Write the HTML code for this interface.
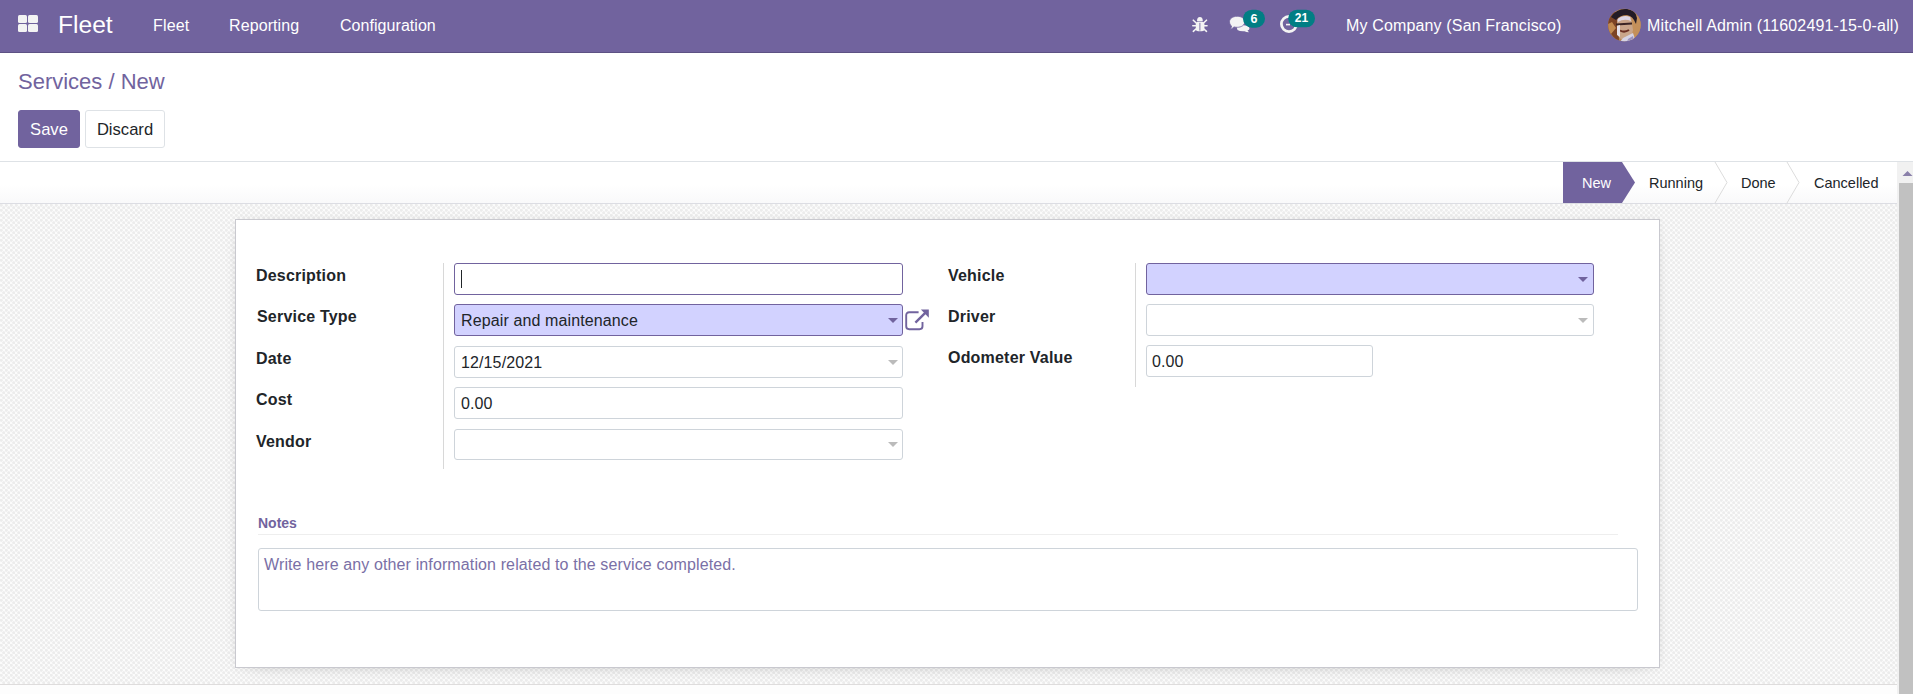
<!DOCTYPE html>
<html><head><meta charset="utf-8">
<style>
*{box-sizing:border-box;margin:0;padding:0}
html,body{width:1913px;height:694px;overflow:hidden;background:#fff;font-family:"Liberation Sans",sans-serif;color:#4c4c4c}
.abs{position:absolute}
#nav{position:absolute;left:0;top:0;width:1913px;height:53px;background:#71639e;border-bottom:1px solid #5d5184;color:#fff}
#nav .t{position:absolute;white-space:nowrap;font-size:17px;line-height:20px;color:#fff}
#cp{position:absolute;left:0;top:53px;width:1913px;height:109px;background:#fff;border-bottom:1px solid #dee2e6}
.bc{position:absolute;left:18px;top:69px;font-size:22px;color:#71639e;white-space:nowrap}
.btn{position:absolute;top:110px;height:38px;border-radius:3px;font-size:16.6px;line-height:38px;text-align:center}
#sb{position:absolute;left:0;top:162px;width:1897px;height:42px;background:linear-gradient(#fff 55%,#f9f9fa);border-bottom:1px solid #dcdde3}
#bg{position:absolute;left:0;top:204px;width:1897px;height:481px;
 background-color:#fbfbfb;
 background-image:radial-gradient(circle at 1.25px 1.25px,rgba(0,0,0,.06) 0,rgba(0,0,0,.06) 1.1px,rgba(0,0,0,0) 1.9px),radial-gradient(circle at 3.75px 3.75px,rgba(0,0,0,.06) 0,rgba(0,0,0,.06) 1.1px,rgba(0,0,0,0) 1.9px);
 background-size:5px 5px}
#bottom{position:absolute;left:0;top:684px;width:1897px;height:10px;background:#fdfdfd;border-top:1px solid #dedcdc}
#sheet{position:absolute;left:235px;top:219px;width:1425px;height:449px;background:#fff;border:1px solid #c9c9cf;box-shadow:0 0 9px rgba(0,0,0,.045),0 5px 20px -15px rgba(0,0,0,.4)}
.lbl{position:absolute;font-weight:bold;font-size:16px;letter-spacing:0.2px;margin-top:1px;color:#212529;white-space:nowrap}
.inp{position:absolute;height:32px;border:1px solid #ced4da;border-radius:3px;background:#fff}
.req{background:#d2d2ff;border-color:#71639e}
.val{position:absolute;font-size:16px;letter-spacing:0.12px;margin-top:2px;color:#212529;white-space:nowrap}
.vline{position:absolute;width:1px;background:#d8d8d8}
.st{position:absolute;top:174.5px;font-size:14.5px;color:#212529;white-space:nowrap}
.caret{position:absolute;width:0;height:0;border-left:5px solid transparent;border-right:5px solid transparent;border-top:5px solid #bbb}
#scroll{position:absolute;left:1897px;top:162px;width:16px;height:532px;background:#f1f1f1}
#thumb{position:absolute;left:1899px;top:183px;width:14px;height:511px;background:#c1c1c1}
</style></head><body>
<div id="nav">
<div class="abs" style="left:18px;top:15px;width:9px;height:8px;background:#f3f3f3;border-radius:1.5px"></div>
<div class="abs" style="left:28px;top:15px;width:10px;height:8px;background:#f3f3f3;border-radius:1.5px"></div>
<div class="abs" style="left:18px;top:24px;width:9px;height:8px;background:#f3f3f3;border-radius:1.5px"></div>
<div class="abs" style="left:28px;top:24px;width:10px;height:8px;background:#f3f3f3;border-radius:1.5px"></div>
<div class="t" id="brand" style="left:58px;top:11px;font-size:24.6px;line-height:28px">Fleet</div>
<div class="t" id="m1" style="left:153px;top:16px;font-size:16px;letter-spacing:0.15px">Fleet</div>
<div class="t" id="m2" style="left:229px;top:16px;font-size:16px;letter-spacing:0.1px">Reporting</div>
<div class="t" id="m3" style="left:340px;top:16px;font-size:16px;letter-spacing:0.05px">Configuration</div>
<svg class="abs" style="left:1188px;top:13px" width="24" height="23" viewBox="1188 13 24 23">
<path d="M1197 21.2 Q1197 17 1199.9 17 Q1202.8 17 1202.8 21.2 Z" fill="#f4f4f4"/>
<rect x="1195.8" y="21.8" width="8.6" height="9.4" rx="2.5" fill="#f4f4f4"/>
<line x1="1199.9" y1="22.8" x2="1199.9" y2="30.6" stroke="#71639e" stroke-width="0.9"/>
<g stroke="#f4f4f4" stroke-width="1.6" stroke-linecap="round">
<line x1="1193.3" y1="20.2" x2="1196.5" y2="23.3"/><line x1="1206.5" y1="20.2" x2="1203.3" y2="23.3"/>
<line x1="1192.8" y1="25.7" x2="1196" y2="25.7"/><line x1="1207" y1="25.7" x2="1204" y2="25.7"/>
<line x1="1193.3" y1="31.3" x2="1196.5" y2="28.5"/><line x1="1206.5" y1="31.3" x2="1203.3" y2="28.5"/>
</g></svg>
<svg class="abs" style="left:1225px;top:5px" width="45" height="31" viewBox="1225 5 45 31">
<path d="M1236 25 Q1249.5 24.5 1249.5 28.3 Q1249.5 30 1247.5 30.6 L1249 32.3 Q1246 32 1244.5 31.2 Q1240 31.5 1237.5 30 Z" fill="#f4f4f4"/>
<path d="M1237.2 16.3 C1242 16.3 1244.8 18.8 1244.8 21.8 C1244.8 25 1241.5 27.3 1237.2 27.3 C1236 27.3 1235 27.2 1234 26.9 C1232.8 28 1231.5 29 1230 29.3 C1231 28.3 1231.5 27.3 1231.6 26.1 C1230.3 25.1 1229.5 23.6 1229.5 21.8 C1229.5 18.8 1232.4 16.3 1237.2 16.3 Z" fill="#f4f4f4" stroke="#71639e" stroke-width="0.8"/>
<rect x="1243" y="9.7" width="22" height="18" rx="9" fill="#017e84"/>
</svg>
<div class="abs" style="left:1243px;top:10px;width:22px;height:18px;text-align:center;font-size:12.5px;line-height:18px;font-weight:bold;color:#fff">6</div>
<svg class="abs" style="left:1275px;top:5px" width="45" height="31" viewBox="1275 5 45 31">
<circle cx="1289" cy="24" r="7.6" fill="none" stroke="#f4f4f4" stroke-width="2.8"/>
<line x1="1286" y1="24.6" x2="1290" y2="24.6" stroke="#f4f4f4" stroke-width="1.6"/>
<rect x="1288.2" y="9.7" width="26.8" height="17.5" rx="8.75" fill="#017e84"/>
</svg>
<div class="abs" style="left:1288px;top:9.5px;width:27px;height:17.5px;text-align:center;font-size:12px;line-height:17.5px;font-weight:bold;color:#fff">21</div>
<svg class="abs" style="left:1607px;top:8px" width="35" height="34" viewBox="0 0 35 34">
<defs><clipPath id="cc"><circle cx="17.4" cy="17" r="16.3"/></clipPath></defs>
<g clip-path="url(#cc)">
<rect width="35" height="34" fill="#b9854f"/>
<path d="M0 4 L11 4 L12 34 L0 34 Z" fill="#7c4326"/>
<path d="M1 16 L5 14 L9 20 L4 26 L8 31 L0 32 Z" fill="#c18a52"/>
<path d="M24 8 L35 8 L35 34 L24 34 Z" fill="#c4905a"/>
<path d="M4 9 Q10 0 20 1 Q29 2 30 10 L29 16 Q26 8 20 7 Q13 7 9 12 Z" fill="#231b26"/>
<path d="M10 12 Q16 6 24 9 L26 22 Q25 30 18 33 Q11 31 10 24 Z" fill="#c9a58a"/>
<path d="M10.5 11 Q16 6.5 23 9 L24 13 Q17 10 11 14 Z" fill="#ddd6e6"/>
<path d="M9 15.5 L25 14.5 L25 16.5 L9 17.5 Z" fill="#3a2424"/>
<path d="M13 22.5 Q17.5 25 22 22" stroke="#6a2e22" stroke-width="2" fill="none"/>
<path d="M10 18 L13 17 L13 29 L10 27 Z" fill="#e4e0ea"/>
<path d="M16 30 L26 25 L29 34 L13 34 Z" fill="#d6d3e4"/>
<path d="M21 31 L26 28 L27 34 L20 34 Z" fill="#9c94c0"/>
</g></svg>
<div class="t" id="comp" style="left:1346px;top:16px;font-size:16px;letter-spacing:0.15px">My Company (San Francisco)</div>
<div class="t" id="user" style="left:1647px;top:16px;font-size:16px;letter-spacing:0.15px">Mitchell Admin (11602491-15-0-all)</div>
</div>
<div id="cp">
</div>
<div class="bc" id="bc">Services / New</div>
<div class="btn" id="save" style="left:18px;width:62px;background:#71639e;color:#fff;border:1px solid #71639e">Save</div>
<div class="btn" id="disc" style="left:85px;width:80px;background:#fff;color:#212529;border:1px solid #dee2e6">Discard</div>
<div id="sb"></div>
<svg class="abs" style="left:1563px;top:162px" width="330" height="41" viewBox="0 0 330 41">
<polygon points="0,0 59,0 72,20.5 59,41 0,41" fill="#71639e"/>
<polyline points="152,0 164,20.5 152,41" fill="none" stroke="#dcdcdc" stroke-width="1"/>
<polyline points="224,0 236,20.5 224,41" fill="none" stroke="#dcdcdc" stroke-width="1"/>
</svg>
<div class="st" id="s1" style="left:1582px;color:#fff">New</div>
<div class="st" id="s2" style="left:1649px">Running</div>
<div class="st" id="s3" style="left:1741px">Done</div>
<div class="st" id="s4" style="left:1814px">Cancelled</div>
<div id="bg"></div>
<div id="bottom"></div>
<div id="sheet"></div>
<div class="lbl" id="l1" style="left:256px;top:266px">Description</div>
<div class="lbl" id="l2" style="left:257px;top:307px">Service Type</div>
<div class="lbl" id="l3" style="left:256px;top:349px">Date</div>
<div class="lbl" id="l4" style="left:256px;top:390px">Cost</div>
<div class="lbl" id="l5" style="left:256px;top:432px">Vendor</div>
<div class="vline" style="left:443px;top:263px;height:206px"></div>
<div class="inp" style="left:454px;top:263px;width:449px;border-color:#71639e"></div>
<div class="abs" style="left:461px;top:270px;width:1px;height:18px;background:#212529"></div>
<div class="inp req" style="left:454px;top:304px;width:449px"></div>
<div class="val" id="v1" style="left:461px;top:310px">Repair and maintenance</div>
<div class="caret" style="left:888px;top:318px;border-top-color:#71639e"></div>
<div class="inp" style="left:454px;top:346px;width:449px"></div>
<div class="val" id="v2" style="left:461px;top:352px">12/15/2021</div>
<div class="caret" style="left:888px;top:360px"></div>
<div class="inp" style="left:454px;top:387px;width:449px"></div>
<div class="val" id="v3" style="left:461px;top:393px">0.00</div>
<div class="inp" style="left:454px;top:429px;width:449px;height:31px"></div>
<div class="caret" style="left:888px;top:442px"></div>
<svg class="abs" style="left:905px;top:308px" width="25" height="23" viewBox="0 0 25 23">
<path d="M13.6 4.3 H4.2 Q1.2 4.3 1.2 7.3 V18.3 Q1.2 21.2 4.2 21.2 H14.5 Q17.5 21.2 17.5 18.3 V14" fill="none" stroke="#71639e" stroke-width="1.9"/>
<path d="M10.4 14.6 L20.5 4.6" fill="none" stroke="#71639e" stroke-width="2.4"/>
<path d="M15.9 1.6 H23.8 V9.7 Z" fill="#71639e"/>
</svg>
<div class="lbl" id="r1" style="left:948px;top:266px">Vehicle</div>
<div class="lbl" id="r2" style="left:948px;top:307px">Driver</div>
<div class="lbl" id="r3" style="left:948px;top:348px">Odometer Value</div>
<div class="vline" style="left:1135px;top:263px;height:124px"></div>
<div class="inp req" style="left:1146px;top:263px;width:448px"></div>
<div class="caret" style="left:1578px;top:277px;border-top-color:#71639e"></div>
<div class="inp" style="left:1146px;top:304px;width:448px"></div>
<div class="caret" style="left:1578px;top:318px"></div>
<div class="inp" style="left:1146px;top:345px;width:227px"></div>
<div class="val" id="v4" style="left:1152px;top:351px">0.00</div>
<div class="abs" id="notes" style="left:258px;top:515px;font-size:14px;font-weight:bold;color:#71639e">Notes</div>
<div class="abs" style="left:258px;top:534px;width:1360px;height:1px;background:#eee"></div>
<div class="inp" style="left:258px;top:548px;width:1380px;height:63px"></div>
<div class="val" id="ph" style="left:264px;top:554px;color:#7a70a6">Write here any other information related to the service completed.</div>
<div id="scroll"></div>
<svg class="abs" style="left:1897px;top:162px" width="16" height="21"><polygon points="5.5,14 10.5,9 15.5,14" fill="#8a80aa"/></svg>
<div id="thumb"></div>
</body></html>
